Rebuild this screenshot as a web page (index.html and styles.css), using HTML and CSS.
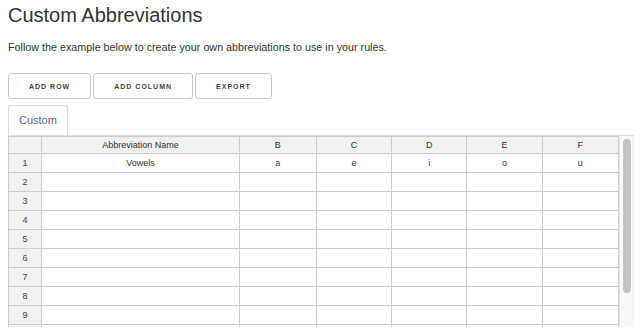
FILE: index.html
```html
<!DOCTYPE html>
<html lang="en">

<head>
  <meta charset="UTF-8">
  <meta name="viewport" content="width=device-width, initial-scale=1">
  <title>Custom Abbreviations</title>
  <link rel="stylesheet" href="styles.css">
</head>

<body>

  <h1>Custom Abbreviations</h1>
  <p class="intro">Follow the example below to create your own abbreviations to use in your rules.</p>

  <div class="actions">
    <button type="button">Add Row</button>
    <button type="button">Add Column</button>
    <button type="button">Export</button>
  </div>

  <div class="tabs">
    <span class="tab">Custom</span>
  </div>

  <div class="sheet">
    <div class="sheet-body">
      <table>
        <colgroup>
          <col class="col-num">
          <col class="col-name">
          <col class="col-b">
          <col class="col-x">
          <col class="col-x">
          <col class="col-x">
          <col class="col-last">
        </colgroup>
        <thead>
          <tr>
            <th></th>
            <th>Abbreviation Name</th>
            <th>B</th>
            <th>C</th>
            <th>D</th>
            <th>E</th>
            <th>F</th>
          </tr>
        </thead>
        <tbody>
          <tr><th>1</th><td>Vowels</td><td>a</td><td>e</td><td>i</td><td>o</td><td>u</td></tr>
          <tr><th>2</th><td></td><td></td><td></td><td></td><td></td><td></td></tr>
          <tr><th>3</th><td></td><td></td><td></td><td></td><td></td><td></td></tr>
          <tr><th>4</th><td></td><td></td><td></td><td></td><td></td><td></td></tr>
          <tr><th>5</th><td></td><td></td><td></td><td></td><td></td><td></td></tr>
          <tr><th>6</th><td></td><td></td><td></td><td></td><td></td><td></td></tr>
          <tr><th>7</th><td></td><td></td><td></td><td></td><td></td><td></td></tr>
          <tr><th>8</th><td></td><td></td><td></td><td></td><td></td><td></td></tr>
          <tr><th>9</th><td></td><td></td><td></td><td></td><td></td><td></td></tr>
          <tr><th></th><td></td><td></td><td></td><td></td><td></td><td></td></tr>
        </tbody>
      </table>
    </div>
    <div class="scrollbar">
      <div class="thumb"></div>
    </div>
  </div>

</body>

</html>
```

FILE: styles.css
```css
html {
  overflow: hidden;
}

body {
  background: #FFF;
  color: #333;
  font-family: "Liberation Sans", Arial, sans-serif;
  margin: 0;
  padding: 3px 8px 0;
}

h1 {
  font-size: 20px;
  font-weight: normal;
  line-height: 24px;
  margin: 0;
}

.intro {
  font-size: 10.75px;
  line-height: 14px;
  margin: 13px 0 0;
}

.actions {
  display: flex;
  gap: 2px;
  margin-top: 19px;
}

.actions button {
  background: #FFF;
  border: 1px solid #C8C8C8;
  border-radius: 3px;
  color: #444;
  font-family: inherit;
  font-size: 7px;
  font-weight: bold;
  height: 26px;
  letter-spacing: 1px;
  padding: 0 20px;
  text-transform: uppercase;
}

.tabs {
  display: flex;
  margin-top: 6px;
}

.tab {
  border: 1px solid #DDD;
  border-bottom: 0;
  border-radius: 3px 3px 0 0;
  color: #666;
  font-size: 11px;
  line-height: 29px;
  padding: 0 10px;
}

.sheet {
  border-top: 1px solid #DDD;
  display: flex;
  height: 191px;
}

.sheet-body {
  flex: 1;
  overflow: hidden;
}

.scrollbar {
  background: #F9F9F9;
  border-left: 1px solid #E6E6E6;
  border-right: 1px solid #EEE;
  box-sizing: border-box;
  padding: 3px 2px 0 3px;
  width: 15px;
}

.thumb {
  background: #C3C3C3;
  border-radius: 4px;
  height: 154px;
}

table {
  border-collapse: collapse;
  font-size: 9px;
  table-layout: fixed;
  width: 611px;
}

.col-num {
  width: 33px;
}

.col-name {
  width: 197px;
}

.col-b {
  width: 77px;
}

.col-x {
  width: 75px;
}

.col-last {
  width: 76px;
}

th,
td {
  border: 1px solid #CCC;
  color: #333;
  font-weight: normal;
  height: 18px;
  padding: 0;
  text-align: center;
}

thead th {
  background: #F0F0F0;
  height: 16px;
}

tbody th {
  background: #F0F0F0;
  color: #444;
}
```
